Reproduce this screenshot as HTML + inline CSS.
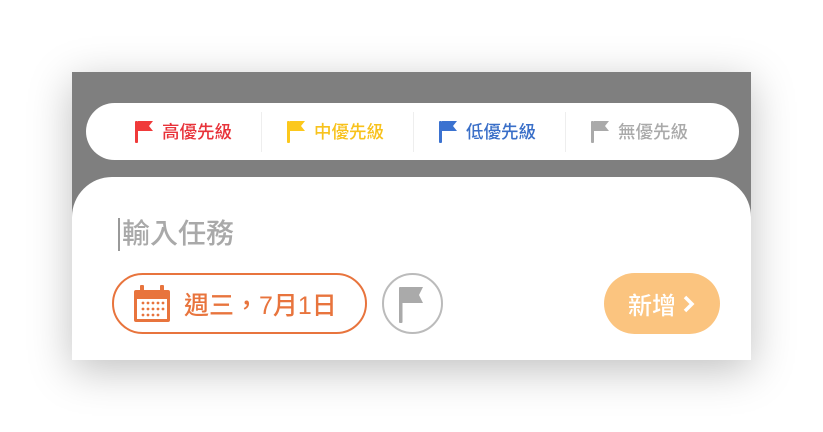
<!DOCTYPE html>
<html><head><meta charset="utf-8"><style>
*{margin:0;padding:0;box-sizing:border-box}
body{width:823px;height:432px;background:#fff;position:relative;overflow:hidden;font-family:"Liberation Sans","Noto Sans CJK TC",sans-serif}
.panel{position:absolute;left:72px;top:72px;width:679px;height:288px;background:#7f7f7f;box-shadow:0 10px 40px rgba(0,0,0,.25);overflow:hidden}
.pill{position:absolute;left:14px;top:31px;width:653px;height:57px;background:#fff;border-radius:29px}
.it{position:absolute;top:0;height:57px;display:flex;align-items:center;font-size:17.5px;font-weight:500}
.it svg{margin-right:8px}
.div{position:absolute;top:9px;width:1px;height:40px;background:#eee}
.sheet{position:absolute;left:0;top:105px;width:679px;height:200px;background:#fff;border-radius:40px 40px 0 0}
.ph{position:absolute;left:50px;top:37px;font-size:28px;color:#a9a9a9;line-height:40px;font-weight:500}
.cur{position:absolute;left:46px;top:41px;width:2px;height:33px;background:#999}
.date{position:absolute;left:40px;top:96px;width:255px;height:61px;border:2px solid #e8743d;border-radius:31px;color:#e8743d;font-size:25px;font-weight:500;display:flex;align-items:center;padding-left:20px}
.fc{position:absolute;left:310px;top:96px;width:61px;height:61px;border:2px solid #bbb;border-radius:50%}
.btn{position:absolute;left:532px;top:96px;width:116px;height:61px;background:#fbc47f;border-radius:31px;color:#fff;font-size:24px;font-weight:500;display:flex;align-items:center;padding-left:24px}
</style></head><body>
<div class="panel">
 <div class="pill">
  <div class="it" style="left:49px;color:#e8333a"><svg width="19" height="22" viewBox="0 0 19 22"><rect x="0" y="0" width="3" height="22" rx="1" fill="#f03a3a"/><path d="M3 0H18L14 5L18 10H3Z" fill="#f03a3a"/></svg>高優先級</div>
  <div class="div" style="left:175px"></div>
  <div class="it" style="left:201px;color:#f8c21c"><svg width="19" height="22" viewBox="0 0 19 22"><rect x="0" y="0" width="3" height="22" rx="1" fill="#fcc81c"/><path d="M3 0H18L14 5L18 10H3Z" fill="#fcc81c"/></svg>中優先級</div>
  <div class="div" style="left:327px"></div>
  <div class="it" style="left:353px;color:#3a6fc8"><svg width="19" height="22" viewBox="0 0 19 22"><rect x="0" y="0" width="3" height="22" rx="1" fill="#3b72d0"/><path d="M3 0H18L14 5L18 10H3Z" fill="#3b72d0"/></svg>低優先級</div>
  <div class="div" style="left:479px"></div>
  <div class="it" style="left:505px;color:#aaa"><svg width="19" height="22" viewBox="0 0 19 22"><rect x="0" y="0" width="3" height="22" rx="1" fill="#aaa"/><path d="M3 0H18L14 5L18 10H3Z" fill="#aaa"/></svg>無優先級</div>
 </div>
 <div class="sheet">
  <div class="cur"></div>
  <div class="ph">輸入任務</div>
  <div class="date"><svg width="36" height="37" viewBox="0 0 36 37" style="margin-right:14px"><rect x="0" y="5" width="36" height="32" rx="2" fill="#e8743d"/><rect x="6" y="0" width="4" height="9" rx="1" fill="#e8743d"/><rect x="26" y="0" width="4" height="9" rx="1" fill="#e8743d"/><rect x="3" y="14" width="30" height="20" fill="#fff"/><g fill="#e8743d"><circle cx="9" cy="18" r="1.4"/><circle cx="14" cy="18" r="1.4"/><circle cx="19" cy="18" r="1.4"/><circle cx="24" cy="18" r="1.4"/><circle cx="29" cy="18" r="1.4"/><circle cx="9" cy="24" r="1.4"/><circle cx="14" cy="24" r="1.4"/><circle cx="19" cy="24" r="1.4"/><circle cx="24" cy="24" r="1.4"/><circle cx="29" cy="24" r="1.4"/><circle cx="9" cy="30" r="1.4"/><circle cx="14" cy="30" r="1.4"/><circle cx="19" cy="30" r="1.4"/><circle cx="24" cy="30" r="1.4"/></g></svg>週三，7月1日</div>
  <div class="fc"><svg width="61" height="61" viewBox="0 0 61 61" style="position:absolute;left:-2px;top:-2px"><rect x="17" y="14" width="3.5" height="36" rx="1" fill="#aaa"/><path d="M20 14H41L37 22L41 30H20Z" fill="#aaa"/></svg></div>
  <div class="btn">新增<svg width="14" height="20" viewBox="0 0 14 20" style="margin-left:6px"><path d="M3 3L10 10L3 17" stroke="#fff" stroke-width="3.5" fill="none"/></svg></div>
 </div>
</div>
</body></html>
